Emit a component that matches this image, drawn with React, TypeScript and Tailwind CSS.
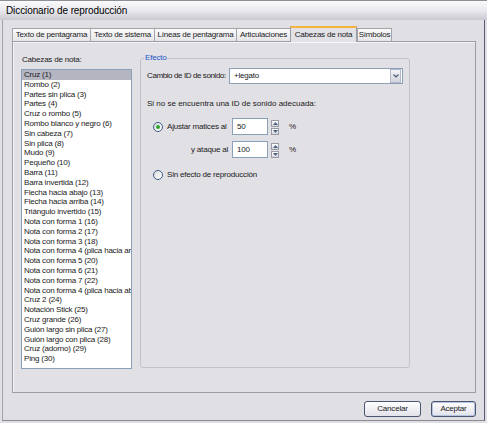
import React from 'react';

const font = { fontFamily: '"Liberation Sans", Arial, sans-serif' };

const items = [
  'Cruz (1)',
  'Rombo (2)',
  'Partes sin plica (3)',
  'Partes (4)',
  'Cruz o rombo (5)',
  'Rombo blanco y negro (6)',
  'Sin cabeza (7)',
  'Sin plica (8)',
  'Mudo (9)',
  'Pequeño (10)',
  'Barra (11)',
  'Barra invertida (12)',
  'Flecha hacia abajo (13)',
  'Flecha hacia arriba (14)',
  'Triángulo invertido (15)',
  'Nota con forma 1 (16)',
  'Nota con forma 2 (17)',
  'Nota con forma 3 (18)',
  'Nota con forma 4 (plica hacia arriba) (19)',
  'Nota con forma 5 (20)',
  'Nota con forma 6 (21)',
  'Nota con forma 7 (22)',
  'Nota con forma 4 (plica hacia abajo) (23)',
  'Cruz 2 (24)',
  'Notación Stick (25)',
  'Cruz grande (26)',
  'Guión largo sin plica (27)',
  'Guión largo con plica (28)',
  'Cruz (adorno) (29)',
  'Ping (30)',
];

const tabs = [
  { label: 'Texto de pentagrama', w: 'w-[78px]' },
  { label: 'Texto de sistema', w: 'w-[64px]' },
  { label: 'Líneas de pentagrama', w: 'w-[82px]' },
  { label: 'Articulaciones', w: 'w-[54px]' },
  { label: 'Cabezas de nota', w: 'w-[67px]', active: true },
  { label: 'Símbolos', w: 'w-[35px]' },
];

function Radio({ checked }: { checked?: boolean }) {
  return (
    <span className="flex h-[10px] w-[10px] shrink-0 items-center justify-center rounded-full border border-[#3a5f8a] bg-gradient-to-br from-[#dcdcdc] to-white">
      {checked && <span className="h-[4px] w-[4px] rounded-full bg-[#2fa82f]" />}
    </span>
  );
}

function Spinner() {
  return (
    <div className="ml-[3px] flex w-[8px] flex-col gap-[1px] pt-[1px]">
      <div className="flex h-[7px] items-center justify-center border border-[#9a9aa6] bg-gradient-to-b from-white to-[#d6d6de]">
        <svg width="5" height="3" viewBox="0 0 5 3"><path d="M0 3 L2.5 0 L5 3 Z" fill="#4d6185" /></svg>
      </div>
      <div className="flex h-[7px] items-center justify-center border border-[#9a9aa6] bg-gradient-to-b from-white to-[#d6d6de]">
        <svg width="5" height="3" viewBox="0 0 5 3"><path d="M0 0 L2.5 3 L5 0 Z" fill="#4d6185" /></svg>
      </div>
    </div>
  );
}

export default function App() {
  return (
    <div
      className="flex h-[423px] w-[487px] flex-col bg-[#e0dfe3] text-[8px] tracking-[-0.2px] text-[#1a1a1a]"
      style={font}
    >
      {/* title bar */}
      <div className="flex h-[20px] shrink-0 items-center border-t border-[#8e8e96] bg-gradient-to-b from-[#fafafb] via-[#e9e9ee] to-[#c9c9d1] pl-[6px] text-[10px] tracking-[-0.1px] text-black">
        Diccionario de reproducción
      </div>

      <div className="mx-[2px] mb-[2px] flex flex-1 flex-col border-b border-l border-r border-b-[#8a8a92] border-l-[#a2a2aa] border-r-[#5a5a78]">
        {/* tabs */}
        <div className="mt-[6px] flex h-[15px] items-end pl-[9px]">
          {tabs.map((t) =>
            t.active ? (
              <div
                key={t.label}
                className={`relative z-10 -mb-[1px] flex h-[16px] ${t.w} items-center justify-center whitespace-nowrap border-l border-r border-t-2 border-l-[#9c9ca4] border-r-[#9c9ca4] border-t-[#f3b33d] bg-[#e2e1e6] pb-[1px]`}
              >
                {t.label}
              </div>
            ) : (
              <div
                key={t.label}
                className={`flex h-[13px] ${t.w} items-center justify-center whitespace-nowrap border-l border-t border-[#a4a4ac] bg-gradient-to-b from-[#fbfbfc] to-[#e6e6ea] last:border-r`}
              >
                {t.label}
              </div>
            )
          )}
        </div>

        {/* panel */}
        <div className="ml-[9px] mr-[8px] h-[352px] border border-[#9c9ca4] bg-[#e1e0e5] shadow-[inset_1px_1px_0_#f6f6f8]">
          <div className="flex pl-[8px] pt-[13px]">
            {/* list column */}
            <div className="flex w-[111px] flex-col">
              <div className="h-[10px] whitespace-nowrap pl-[1px] leading-[10px]">Cabezas de nota:</div>
              <div className="mt-[4px] h-[300px] overflow-hidden border border-[#8aa0b9] bg-white">
                {items.map((it, i) => (
                  <div
                    key={it}
                    className={`h-[9.8px] overflow-hidden whitespace-nowrap pl-[2px] leading-[9.8px] ${i === 0 ? 'bg-[#b5b5c2]' : ''}`}
                  >
                    {it}
                  </div>
                ))}
              </div>
            </div>

            {/* group box */}
            <div className="relative ml-[8px] mt-[3px] h-[310px] w-[270px] rounded-[3px] border border-[#c2c2ca]">
              <span className="absolute -top-[6px] left-[3px] bg-[#e1e0e5] px-[1px] leading-[10px] text-[#2256c8]">
                Efecto
              </span>

              <div className="mt-[9px] flex h-[16px] items-center pl-[6px]">
                <div className="w-[82px] whitespace-nowrap tracking-[-0.4px]">Cambio de ID de sonido:</div>
                <div className="flex h-[16px] w-[174px] items-center border border-[#8aa0b9] bg-white pl-[4px]">
                  <span className="flex-1">+legato</span>
                  <span className="mr-[1px] flex h-[14px] w-[11px] items-center justify-center border border-[#b4b8c6] bg-gradient-to-b from-[#f4f4f8] to-[#d2d4de]">
                    <svg width="6" height="4" viewBox="0 0 6 4"><path d="M0.5 0.5 L3 3 L5.5 0.5" stroke="#4d5a78" strokeWidth="1.2" fill="none" /></svg>
                  </span>
                </div>
              </div>

              <div className="mt-[15px] h-[10px] whitespace-nowrap pl-[6px] leading-[10px] tracking-[0px]">
                Si no se encuentra una ID de sonido adecuada:
              </div>

              <div className="mt-[9px] flex h-[17px] items-center pl-[12px]">
                <div className="flex w-[79px] items-center gap-[4px] whitespace-nowrap">
                  <Radio checked />
                  <span>Ajustar matices al</span>
                </div>
                <div className="flex h-[17px] w-[36px] items-center border border-[#8aa0b9] bg-white pl-[4px]">50</div>
                <Spinner />
                <span className="ml-[10px]">%</span>
              </div>

              <div className="mt-[6px] flex h-[17px] items-center pl-[12px]">
                <div className="w-[79px] whitespace-nowrap pr-[4px] text-right">y ataque al</div>
                <div className="flex h-[17px] w-[36px] items-center border border-[#8aa0b9] bg-white pl-[4px]">100</div>
                <Spinner />
                <span className="ml-[10px]">%</span>
              </div>

              <div className="mt-[11px] flex h-[12px] items-center gap-[4px] whitespace-nowrap pl-[12px]">
                <Radio />
                <span>Sin efecto de reproducción</span>
              </div>
            </div>
          </div>
        </div>

        {/* buttons */}
        <div className="mt-[8px] flex justify-end gap-[10px] pr-[8px]">
          <button className="h-[16px] w-[57px] rounded-[3px] border border-[#4a5570] bg-gradient-to-b from-white to-[#e2e2ea] text-[8px]">
            Cancelar
          </button>
          <button className="h-[16px] w-[45px] rounded-[3px] border border-[#4a5570] bg-gradient-to-b from-white to-[#e2e2ea] text-[8px] shadow-[inset_0_0_0_1px_#b9c4e0]">
            Aceptar
          </button>
        </div>
      </div>
    </div>
  );
}
